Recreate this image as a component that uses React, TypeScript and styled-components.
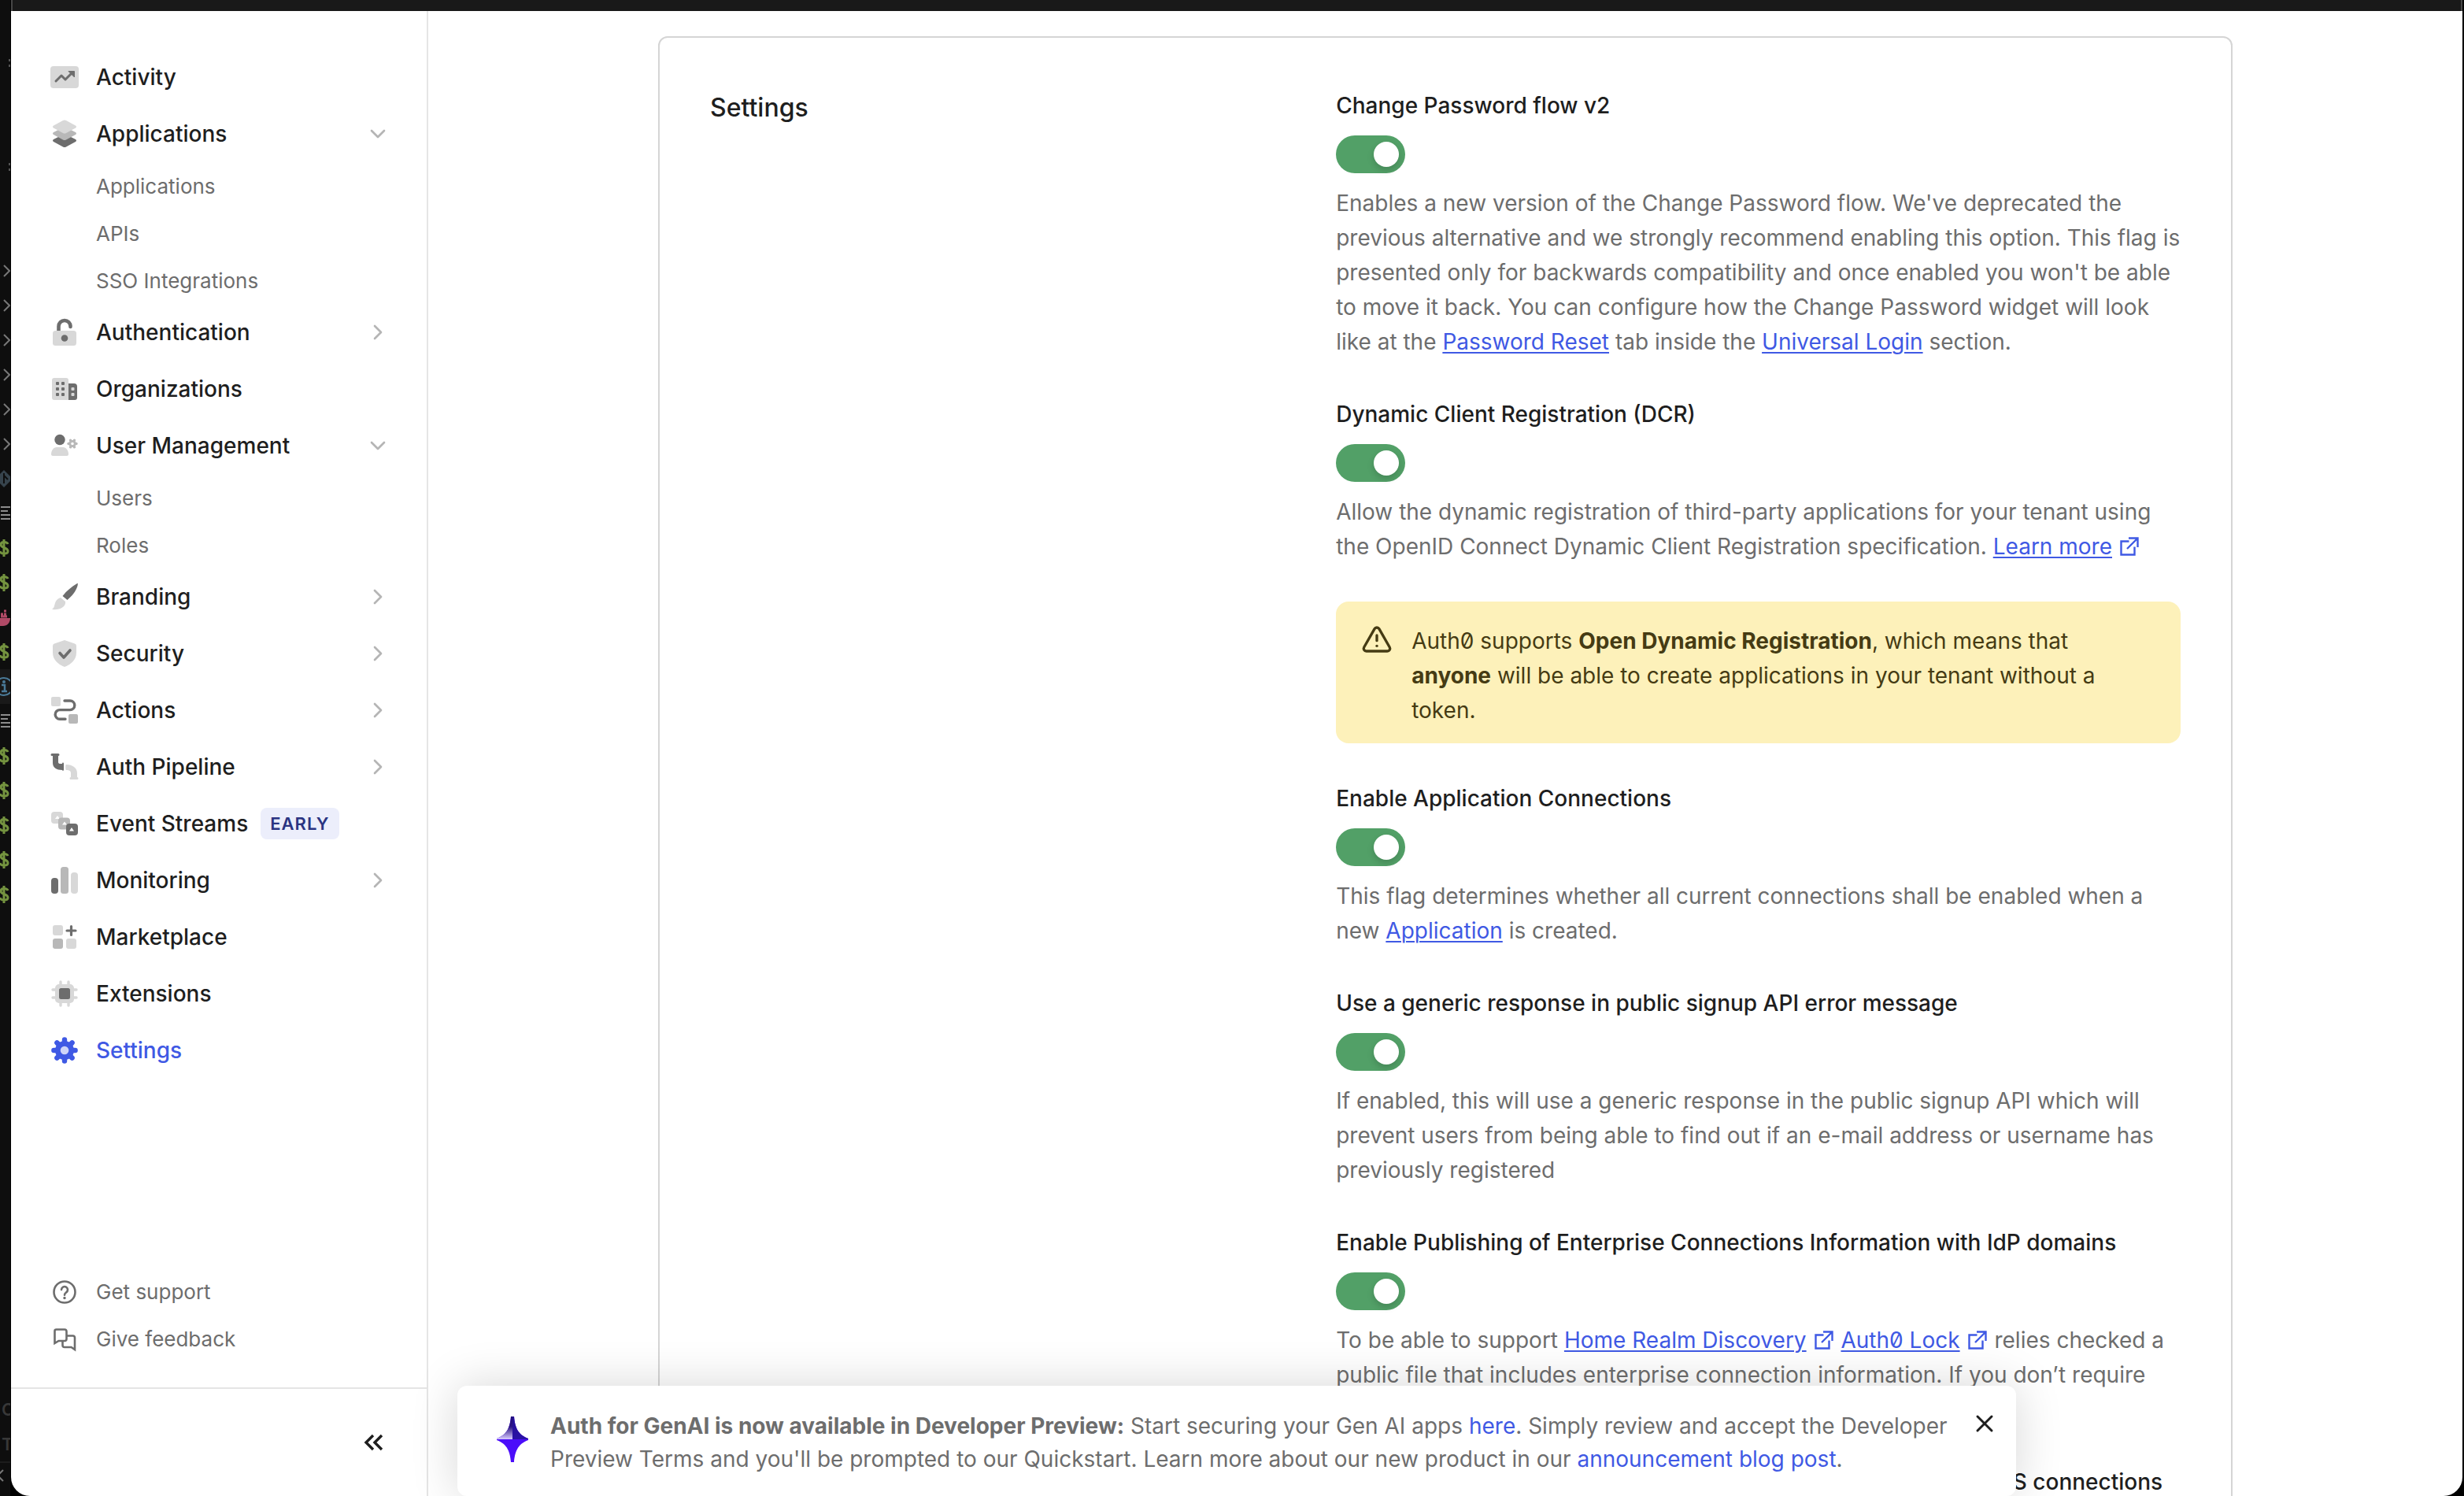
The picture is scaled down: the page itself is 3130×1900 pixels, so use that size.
import React from "react";
import styled, { createGlobalStyle } from "styled-components";
import { ChevronDown, ChevronRight, TriangleAlert, X } from "lucide-react";

const GlobalStyle = createGlobalStyle`
  * { box-sizing: border-box; }
  html, body, #root { height: 100%; }
  body {
    margin: 0;
    overflow: hidden;
    background: #000;
    color: #1e1e1e;
    font-family: Inter, "Open Sans", "Liberation Sans", sans-serif;
    font-size: 28px;
    line-height: 44px;
    font-feature-settings: "zero";
  }
  h2, p, ul { margin: 0; padding: 0; }
  ul { list-style: none; }
  button { border: 0; padding: 0; background: none; font: inherit; cursor: pointer; }
`;

/* ---------- shell ---------- */

const Desktop = styled.div`
  display: flex;
  height: 100vh;
  overflow: hidden;
  background: #000;
`;

const EditorStrip = styled.aside`
  flex: 0 0 14px;
  display: flex;
  flex-direction: column;
  overflow: hidden;
  background: #0e0e0e;
  border-right: 1px solid #000;
  padding-top: 58px;
`;

const Gutter = styled.div<{ $active?: boolean }>`
  flex: none;
  height: 44px;
  display: flex;
  align-items: center;
  background: ${(p) => (p.$active ? "#191919" : "transparent")};
  svg { display: block; flex: none; }
`;

const StripFooter = styled.div`
  margin-top: auto;
`;

const StripLetter = styled.div`
  height: 44px;
  padding-left: 2px;
  color: #383838;
  font-size: 22px;
  font-weight: 600;
`;

const StripStatus = styled.div`
  height: 44px;
  border-top: 2px solid #1c1c1c;
  svg { display: block; }
`;

const AppWindow = styled.div`
  position: relative;
  flex: 1;
  min-width: 0;
  display: flex;
  flex-direction: column;
  margin-right: 2px;
  overflow: hidden;
  border-radius: 0 0 24px 24px;
  background: #fff;
`;

const TopBar = styled.div`
  flex: 0 0 14px;
  background: #191919;
  border: solid #464646;
  border-width: 0 2px;
`;

const Body = styled.div`
  flex: 1;
  min-height: 0;
  display: flex;
`;

/* ---------- sidebar ---------- */

const Sidebar = styled.nav`
  flex: 0 0 530px;
  display: flex;
  flex-direction: column;
  border-right: 2px solid #e5e5e5;
`;

const NavList = styled.ul`
  flex: 1;
  padding: 48px 46px 0 48px;
`;

const NavLink = styled.a<{ $active?: boolean }>`
  display: flex;
  align-items: center;
  height: 72px;
  color: ${(p) => (p.$active ? "#3f59e4" : "#1e1e1e")};
  font-weight: 500;
  text-decoration: none;
`;

const IconSlot = styled.span`
  flex: 0 0 40px;
  height: 40px;
  margin-right: 20px;
  svg { display: block; }
`;

const NavChevron = styled.span`
  margin-left: auto;
  width: 32px;
  height: 32px;
  color: #b5b5b5;
  svg { display: block; }
`;

const SubLink = styled.a`
  display: flex;
  align-items: center;
  height: 60px;
  padding: 2px 0 0 60px;
  color: #6d6d6d;
  font-size: 26px;
  text-decoration: none;
`;

const Tag = styled.span`
  margin-left: 16px;
  height: 40px;
  padding: 0 12px;
  border-radius: 8px;
  background: #eceefb;
  color: #2a3482;
  font-size: 22px;
  font-weight: 600;
  line-height: 40px;
  letter-spacing: 1px;
`;

const SupportList = styled.ul`
  padding: 0 48px 32px;
`;

const SupportLink = styled.a`
  display: flex;
  align-items: center;
  height: 60px;
  padding-top: 2px;
  color: #6d6d6d;
  font-size: 26px;
  text-decoration: none;
`;

const SidebarFooter = styled.div`
  display: flex;
  align-items: center;
  justify-content: flex-end;
  height: 138px;
  padding-right: 48px;
  border-top: 2px solid #e5e5e5;
`;

const IconButton = styled.button`
  display: block;
  color: #1e1e1e;
  svg { display: block; }
`;

/* ---------- main ---------- */

const Main = styled.main`
  flex: 1;
  min-width: 0;
  overflow: hidden;
  padding: 32px 48px 0;
`;

const Card = styled.section`
  display: grid;
  grid-template-columns: 2fr 3fr;
  column-gap: 80px;
  max-width: 2000px;
  margin: 0 auto;
  padding: 64px;
  border: 2px solid #d5d5d5;
  border-radius: 12px;
`;

const SectionTitle = styled.h2`
  padding-top: 1px;
  font-size: 32px;
  line-height: 48px;
  font-weight: 500;
`;

const Fields = styled.div`
  display: flex;
  flex-direction: column;
  gap: 48px;
`;

const Field = styled.div`
  display: flex;
  flex-direction: column;
  align-items: flex-start;
  gap: 16px;
`;

const FieldLabel = styled.label`
  font-weight: 500;
`;

const Switch = styled.input`
  appearance: none;
  display: flex;
  align-items: center;
  width: 88px;
  height: 48px;
  margin: 0;
  padding: 8px;
  border-radius: 24px;
  background: #8a8a8a;
  cursor: pointer;

  &::before {
    content: "";
    width: 32px;
    height: 32px;
    border-radius: 50%;
    background: #fff;
    box-shadow: 0 4px 8px rgba(0, 0, 0, 0.16);
  }
  &:checked { background: #52a067; justify-content: flex-end; }
`;

const Help = styled.p`
  color: #6d6d6d;
`;

const TextLink = styled.a`
  color: #3f59e4;
  text-decoration: underline;
  text-decoration-thickness: 2px;
  text-underline-offset: 3px;
`;

const LinkIcon = styled.svg`
  width: 28px;
  height: 28px;
  margin-left: 8px;
  vertical-align: -4px;
  color: #3f59e4;
`;

const Alert = styled.div`
  display: flex;
  gap: 24px;
  padding: 28px 40px 20px 32px;
  border-radius: 16px;
  background: #fdf1ba;
  color: #453b13;
  svg { flex: none; }
`;

/* ---------- banner ---------- */

const Banner = styled.div`
  position: absolute;
  bottom: 0;
  left: 50%;
  display: flex;
  align-items: flex-start;
  width: 1980px;
  max-width: 90%;
  padding: 30px 22px 26px 50px;
  transform: translateX(-50%);
  border-radius: 12px;
  background: #fff;
  box-shadow: 0 0 60px rgba(0, 0, 0, 0.16);
  color: #6d6d6d;
  line-height: 42px;
`;

const BannerIcon = styled.svg`
  flex: none;
  width: 40px;
  height: 60px;
  margin: 8px 28px 0 0;
`;

const BannerText = styled.p`
  flex: 1;
  a { color: #3f59e4; text-decoration: none; }
`;

/* ---------- icons ---------- */

const D = "#6d6d6d";
const M = "#b8b8b8";
const L = "#d8d8d8";

const Svg = ({ children }: { children: React.ReactNode }) => (
  <svg width="40" height="40" viewBox="0 0 40 40" fill="none" aria-hidden="true">{children}</svg>
);

const gear = (cx: number, cy: number, r: number, w: number, color: string, step = 45) =>
  Array.from({ length: 360 / step }, (_, i) => i * step).map((a) => (
    <path key={a} d={`M${cx} ${cy}H${cx + r}`} stroke={color} strokeWidth={w} strokeLinecap="round" transform={`rotate(${a} ${cx} ${cy})`} />
  ));

const icons: Record<string, React.ReactNode> = {
  activity: (
    <Svg>
      <rect x="2" y="6" width="36" height="28" rx="4" fill={L} />
      <path d="M9 25l7-7 5 5 9-9" stroke={D} strokeWidth="3" strokeLinecap="round" strokeLinejoin="round" />
      <path d="M25 12.500h7.500v7.500z" fill={D} stroke={D} strokeLinejoin="round" />
    </Svg>
  ),
  layers: (
    <Svg>
      <path d="M20 20l14 7q2 1.500 0 3l-12 6.500q-2 1-4 0L6 30q-2-1.500 0-3z" fill={D} />
      <path d="M20 11l14 7q2 1.500 0 3l-12 6.500q-2 1-4 0L6 21q-2-1.500 0-3z" fill={M} />
      <path d="M18 3q2-1 4 0l12 6.500q2 1.500 0 3L22 19q-2 1-4 0L6 12.500q-2-1.500 0-3z" fill={L} />
    </Svg>
  ),
  lock: (
    <Svg>
      <path d="M12.500 18v-5.500a7.500 7.500 0 0 1 15 0" stroke={D} strokeWidth="4.600" />
      <circle cx="27.500" cy="13" r="2.300" fill={D} />
      <rect x="5" y="18" width="30" height="19" rx="3.500" fill={L} />
      <circle cx="20" cy="27.500" r="4.300" fill={D} />
    </Svg>
  ),
  building: (
    <Svg>
      <path d="M25 13h7a4 4 0 0 1 4 4v14a3 3 0 0 1-3 3h-8z" fill={D} />
      <path d="M7 6h15a3 3 0 0 1 3 3v25H7a3 3 0 0 1-3-3V9a3 3 0 0 1 3-3z" fill={L} />
      {[13, 20, 27].map((y) => (
        <g key={y} fill={D}><rect x="9" y={y - 2} width="4" height="4" rx="1" /><rect x="16" y={y - 2} width="4" height="4" rx="1" /></g>
      ))}
      <rect x="28.500" y="18" width="4" height="4" rx="1" fill={L} />
      <rect x="28.500" y="25" width="4" height="4" rx="1" fill={L} />
    </Svg>
  ),
  users: (
    <Svg>
      <circle cx="14" cy="12.500" r="6.700" fill={D} />
      <path d="M3 31c0-5 3-9 7-9h8c4 0 7 4 7 9 0 1-1 2-2 2H5c-1 0-2-1-2-2z" fill={L} />
      {gear(30, 17.5, 5, 3.4, M, 60)}
      <circle cx="30" cy="17.500" r="3.200" stroke={M} strokeWidth="2.800" fill="#fff" />
    </Svg>
  ),
  brush: (
    <Svg>
      <path d="M36 3c1-1 1 1 .5 3-2 7-7 13-13 18l-6-5C23 12 29 7 36 3z" fill={D} />
      <path d="M15 21l6 5c1 6-6 11-17 10 3-2 3-5 4-8 1-4 4-6 7-7z" fill={L} />
    </Svg>
  ),
  shield: (
    <Svg>
      <path d="M20 3l13 4.500q2 .7 2 3V19c0 9-7 15-15 18C12 34 5 28 5 19v-8.500q0-2.300 2-3z" fill={L} />
      <path d="M14 19.500l5 5.500 8-9" stroke={D} strokeWidth="3.600" strokeLinecap="round" strokeLinejoin="round" />
    </Svg>
  ),
  actions: (
    <Svg>
      <rect x="3" y="3" width="12" height="12" rx="2" fill={L} />
      <rect x="25" y="25" width="12" height="12" rx="2" fill={M} />
      <path d="M20 8h7a5.800 5.800 0 0 1 0 11.600H14a5.800 5.800 0 0 0 0 11.700h7" stroke={D} strokeWidth="3.400" strokeLinecap="round" />
    </Svg>
  ),
  pipeline: (
    <Svg>
      <path d="M4 3h8a1.300 1.300 0 0 1 0 3v8q0 2 3 2h2c0-2 2-2 2 0v8c0 1-2 1-2 0-7 0-12-3-12-9V6H4a1.400 1.400 0 0 1 0-3z" fill={D} />
      <path d="M22 17c8 0 14 4 14 11v5a1.500 1.500 0 0 1 0 3h-8a1.500 1.500 0 0 1 0-3v-5c0-3-2-4-6-4-1 0-1-7 0-7z" fill={L} />
    </Svg>
  ),
  streams: (
    <Svg>
      <rect x="3" y="5" width="15" height="15" rx="4" fill={L} />
      <path d="M8 14l3-4 3 4z" fill="#fff" />
      <rect x="12" y="12.500" width="15" height="15" rx="4" fill={M} />
      <path d="M17 21.500l3-4 3 4z" fill="#fff" />
      <rect x="22" y="20" width="15" height="15" rx="4" fill={D} />
      <path d="M26 29.500l3-4.500 3 4.500z" fill="#fff" />
    </Svg>
  ),
  bars: (
    <Svg>
      <rect x="3" y="17" width="9" height="20" rx="4" fill={D} />
      <rect x="15" y="3" width="10" height="34" rx="3.500" fill={M} />
      <rect x="28" y="10" width="9" height="27" rx="4" fill={L} />
    </Svg>
  ),
  market: (
    <Svg>
      <rect x="5" y="5" width="13" height="13" rx="3" fill={L} />
      <rect x="5" y="22" width="13" height="13" rx="3" fill={M} />
      <rect x="22" y="22" width="13" height="13" rx="3" fill={L} />
      <path d="M28.500 6.500v11M23 12h11" stroke={D} strokeWidth="3.200" strokeLinecap="round" />
    </Svg>
  ),
  chip: (
    <Svg>
      <path d="M15 5v30M25 5v30M5 15h30M5 25h30" stroke={L} strokeWidth="3.400" strokeLinecap="round" />
      <rect x="8" y="8" width="24" height="24" rx="5" fill={L} />
      <rect x="13" y="13" width="14" height="14" rx="2.500" fill={D} />
    </Svg>
  ),
  gear: (
    <Svg>
      {gear(20, 20, 13.6, 6.4, "#3f59e4")}
      <circle cx="20" cy="20" r="12" fill="#3f59e4" />
      <circle cx="20" cy="20" r="5.300" fill="#cfd5f8" />
    </Svg>
  ),
  help: (
    <Svg>
      <circle cx="20" cy="20" r="13.500" stroke={D} strokeWidth="2.600" />
      <path d="M16 17a4 4 0 1 1 6 3.500c-1.500 1-2 1.500-2 3.200" stroke={D} strokeWidth="2.600" strokeLinecap="round" />
      <circle cx="20" cy="27.500" r="1.700" fill={D} />
    </Svg>
  ),
  feedback: (
    <Svg>
      <path d="M9.500 7.500H20q2.500 0 2.500 2.500v9.500q0 2.500-2.500 2.500h-7.500L7.500 25V9.500q0-2 2-2z" stroke={D} strokeWidth="2.600" />
      <path d="M23 15.500h7.500q2.500 0 2.500 2.500v15L28.500 30H20q-2.500 0-2.500-2.500V22" stroke={D} strokeWidth="2.600" />
    </Svg>
  ),
};

const Collapse = () => (
  <svg width="40" height="40" viewBox="0 0 40 40" fill="none" stroke="currentColor" strokeWidth="3.400" aria-hidden="true">
    <path d="M20 11l-9 9 9 9M31 11l-9 9 9 9" />
  </svg>
);

const External = () => (
  <LinkIcon viewBox="0 0 28 28" fill="none" stroke="currentColor" strokeWidth="2.400" aria-hidden="true">
    <path d="M13.500 7.500h-10v17h17v-10M13 3.500h11.500V15M24.500 3.500L11 17" />
  </LinkIcon>
);

/* ---------- data ---------- */

type Item = { icon: string; label: string; chevron?: "down" | "right"; sub?: string[]; tag?: string; active?: boolean };

const items: Item[] = [
  { icon: "activity", label: "Activity" },
  { icon: "layers", label: "Applications", chevron: "down", sub: ["Applications", "APIs", "SSO Integrations"] },
  { icon: "lock", label: "Authentication", chevron: "right" },
  { icon: "building", label: "Organizations" },
  { icon: "users", label: "User Management", chevron: "down", sub: ["Users", "Roles"] },
  { icon: "brush", label: "Branding", chevron: "right" },
  { icon: "shield", label: "Security", chevron: "right" },
  { icon: "actions", label: "Actions", chevron: "right" },
  { icon: "pipeline", label: "Auth Pipeline", chevron: "right" },
  { icon: "streams", label: "Event Streams", tag: "EARLY" },
  { icon: "bars", label: "Monitoring", chevron: "right" },
  { icon: "market", label: "Marketplace" },
  { icon: "chip", label: "Extensions" },
  { icon: "gear", label: "Settings", active: true },
];

const gutterRows = (
  "dots . . dots . . chev chev chev chev chev chev git lines dollar dollar docker dollar info lines dollar dollar dollar dollar dollar"
).split(" ");

const gutterArt: Record<string, React.ReactNode> = {
  dots: <path d="M12 17v3M12 24v3" stroke="#555" strokeWidth="2" />,
  chev: <path d="M5 15l7 7-7 7" stroke="#777" strokeWidth="2" />,
  git: (
    <>
      <path d="M-6 22L5 11l8 8v6l-8 8z" fill="#36434c" />
      <path d="M5 15v13M5 18l5 5" stroke="#0e0e0e" strokeWidth="2" />
    </>
  ),
  lines: <path d="M1 14h12M1 19h9M1 24h12M1 29h12" stroke="#8c8c8c" strokeWidth="2" />,
  dollar: <path d="M10 17c-1-3-9-4-9 1 0 4 9 3 9 8 0 4-9 4-10 0M5 11v22" stroke="#74933f" strokeWidth="3" />,
  docker: (
    <>
      <path d="M1 18h3M5 18h3M5 14h3M1 21h8" stroke="#b04a66" strokeWidth="3" />
      <path d="M-2 23h15c0 6-4 10-9 10h-6z" fill="#b04a66" />
    </>
  ),
  info: (
    <>
      <circle cx="5" cy="22" r="11" stroke="#4a7a98" strokeWidth="2" />
      <path d="M2 20h4v8M2 28h7" stroke="#4a7a98" strokeWidth="2.500" />
      <circle cx="5" cy="16" r="2" fill="#4a7a98" />
    </>
  ),
};

const Setting = ({ id, label, children }: { id: string; label: string; children?: React.ReactNode }) => (
  <Field>
    <FieldLabel htmlFor={id}>{label}</FieldLabel>
    <Switch id={id} type="checkbox" role="switch" defaultChecked />
    {children && <Help>{children}</Help>}
  </Field>
);

export default function App() {
  return (
    <Desktop>
      <GlobalStyle />
      <EditorStrip aria-hidden="true">
        {gutterRows.map((kind, i) => (
          <Gutter key={i} $active={kind === "info"}>
            <svg width="13" height="44" viewBox="0 0 13 44" fill="none">{gutterArt[kind]}</svg>
          </Gutter>
        ))}
        <StripFooter>
          <StripLetter>C</StripLetter>
          <StripLetter>T</StripLetter>
          <StripStatus>
            <svg width="13" height="32" viewBox="0 0 13 32" fill="none">
              <path d="M4 9l-7 7 7 7" stroke="#777" strokeWidth="2" />
            </svg>
          </StripStatus>
        </StripFooter>
      </EditorStrip>
      <AppWindow>
        <TopBar />
        <Body>
          <Sidebar aria-label="Main">
            <NavList>
              {items.map((it) => (
                <li key={it.label}>
                  <NavLink href="#" $active={it.active}>
                    <IconSlot>{icons[it.icon]}</IconSlot>
                    {it.label}
                    {it.tag && <Tag>{it.tag}</Tag>}
                    {it.chevron && (
                      <NavChevron>
                        {it.chevron === "down" ? <ChevronDown size={32} strokeWidth={2} /> : <ChevronRight size={32} strokeWidth={2} />}
                      </NavChevron>
                    )}
                  </NavLink>
                  {it.sub && (
                    <ul>
                      {it.sub.map((s) => (
                        <li key={s}><SubLink href="#">{s}</SubLink></li>
                      ))}
                    </ul>
                  )}
                </li>
              ))}
            </NavList>
            <SupportList>
              <li><SupportLink href="#"><IconSlot>{icons.help}</IconSlot>Get support</SupportLink></li>
              <li><SupportLink href="#"><IconSlot>{icons.feedback}</IconSlot>Give feedback</SupportLink></li>
            </SupportList>
            <SidebarFooter>
              <IconButton aria-label="Collapse sidebar"><Collapse /></IconButton>
            </SidebarFooter>
          </Sidebar>

          <Main>
            <Card>
              <SectionTitle>Settings</SectionTitle>
              <Fields>
                <Setting id="change-password" label="Change Password flow v2">
                  Enables a new version of the Change Password flow. We've deprecated the previous alternative and we
                  strongly recommend enabling this option. This flag is presented only for backwards compatibility and
                  once enabled you won't be able to move it back. You can configure how the Change Password widget will
                  look like at the <TextLink href="#">Password Reset</TextLink> tab inside the{" "}
                  <TextLink href="#">Universal Login</TextLink> section.
                </Setting>
                <Setting id="dcr" label="Dynamic Client Registration (DCR)">
                  Allow the dynamic registration of third-party applications for your tenant using the OpenID Connect
                  Dynamic Client Registration specification. <TextLink href="#">Learn more</TextLink>
                  <External />
                </Setting>
                <Alert role="note">
                  <TriangleAlert size={40} strokeWidth={2} />
                  <p>
                    Auth0 supports <b>Open Dynamic Registration</b>, which means that <b>anyone</b> will be able to
                    create applications in your tenant without a token.
                  </p>
                </Alert>
                <Setting id="app-connections" label="Enable Application Connections">
                  This flag determines whether all current connections shall be enabled when a new{" "}
                  <TextLink href="#">Application</TextLink> is created.
                </Setting>
                <Setting id="generic-response" label="Use a generic response in public signup API error message">
                  If enabled, this will use a generic response in the public signup API which will prevent users from
                  being able to find out if an e-mail address or username has previously registered
                </Setting>
                <Setting id="idp-domains" label="Enable Publishing of Enterprise Connections Information with IdP domains">
                  To be able to support <TextLink href="#">Home Realm Discovery</TextLink>
                  <External /> <TextLink href="#">Auth0 Lock</TextLink>
                  <External /> relies checked a public file that includes enterprise connection information. If you
                  don’t require that functionality, you can disable it.
                </Setting>
                <Setting id="email-verification" label="Enable email verification flow during login for Azure AD and ADFS connections" />
              </Fields>
            </Card>
          </Main>
        </Body>

        <Banner role="status">
          <BannerIcon viewBox="0 0 40 60" aria-hidden="true">
            <defs>
              <linearGradient id="spark-top" x1="0" y1="0" x2="0" y2="1">
                <stop offset="0" stopColor="#1d0a78" />
                <stop offset="0.45" stopColor="#2c1585" />
                <stop offset="1" stopColor="#d9ccff" />
              </linearGradient>
              <linearGradient id="spark-right" x1="0" y1="0" x2="0" y2="1">
                <stop offset="0" stopColor="#24108f" />
                <stop offset="1" stopColor="#2b12a8" />
              </linearGradient>
            </defs>
            <path d="M18 1h4c1 12 4 23 18 28v2C26 36 23 47 22 59h-4C17 47 14 36 0 31v-2C14 24 17 13 18 1z" fill="#4b0dfa" />
            <path d="M18 1h2v29H0v-1C14 24 17 13 18 1z" fill="url(#spark-top)" />
            <path d="M20 1h2c1 12 4 23 18 28v1H20z" fill="url(#spark-right)" />
          </BannerIcon>
          <BannerText>
            <b>Auth for GenAI is now available in Developer Preview:</b> Start securing your Gen AI apps{" "}
            <a href="#">here</a>. Simply review and accept the Developer Preview Terms and you'll be prompted to our
            Quickstart. Learn more about our new product in our <a href="#">announcement blog post</a>.
          </BannerText>
          <IconButton aria-label="Dismiss"><X size={36} strokeWidth={2} /></IconButton>
        </Banner>
      </AppWindow>
    </Desktop>
  );
}
